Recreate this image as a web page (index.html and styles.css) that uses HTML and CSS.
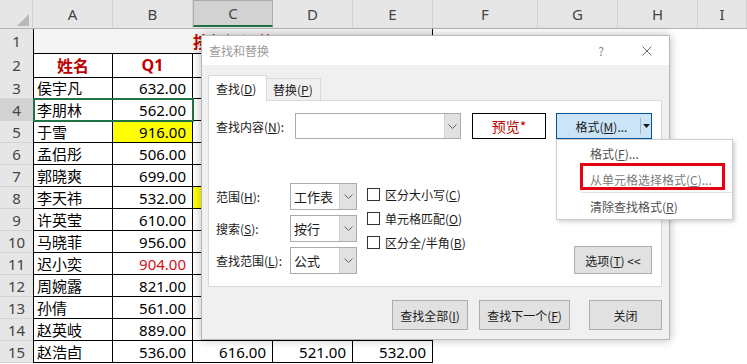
FILE: index.html
```html
<!DOCTYPE html>
<html lang="zh-CN">
<head>
<meta charset="utf-8">
<title>查找和替换</title>
<link rel="stylesheet" href="styles.css">
</head>
<body>
<div class="sheet">
  <div class="hrow">
    <div class="corner"><span class="tri"></span></div>
    <div class="ch">A</div><div class="ch">B</div><div class="ch sel">C</div><div class="ch">D</div><div class="ch">E</div><div class="ch">F</div><div class="ch">G</div><div class="ch">H</div><div class="ch">I</div>
  </div>
  <div class="row tall">
    <div class="rh">1</div>
    <div class="title">按部门汇总</div>
  </div>
  <div class="row tall">
    <div class="rh">2</div>
    <div class="c a h">姓名</div><div class="c h">Q1</div><div class="c"></div><div class="c"></div><div class="c"></div>
  </div>
  <div class="row"><div class="rh">3</div><div class="c a t">侯宇凡</div><div class="c n">632.00</div><div class="c"></div><div class="c"></div><div class="c"></div></div>
  <div class="row"><div class="rh rsel">4</div><div class="c a t">李朋林</div><div class="c n">562.00</div><div class="c"></div><div class="c"></div><div class="c"></div></div>
  <div class="row"><div class="rh">5</div><div class="c a t">于雪</div><div class="c n y">916.00</div><div class="c"></div><div class="c"></div><div class="c"></div></div>
  <div class="row"><div class="rh">6</div><div class="c a t">孟侣彤</div><div class="c n">506.00</div><div class="c"></div><div class="c"></div><div class="c"></div></div>
  <div class="row"><div class="rh">7</div><div class="c a t">郭晓爽</div><div class="c n">699.00</div><div class="c"></div><div class="c"></div><div class="c"></div></div>
  <div class="row"><div class="rh">8</div><div class="c a t">李天祎</div><div class="c n">532.00</div><div class="c y"></div><div class="c"></div><div class="c"></div></div>
  <div class="row"><div class="rh">9</div><div class="c a t">许英莹</div><div class="c n">610.00</div><div class="c"></div><div class="c"></div><div class="c"></div></div>
  <div class="row"><div class="rh">10</div><div class="c a t">马晓菲</div><div class="c n">956.00</div><div class="c"></div><div class="c"></div><div class="c"></div></div>
  <div class="row"><div class="rh">11</div><div class="c a t">迟小奕</div><div class="c n red">904.00</div><div class="c"></div><div class="c"></div><div class="c"></div></div>
  <div class="row"><div class="rh">12</div><div class="c a t">周婉露</div><div class="c n">821.00</div><div class="c"></div><div class="c"></div><div class="c"></div></div>
  <div class="row"><div class="rh">13</div><div class="c a t">孙倩</div><div class="c n">561.00</div><div class="c"></div><div class="c"></div><div class="c"></div></div>
  <div class="row"><div class="rh">14</div><div class="c a t">赵英岐</div><div class="c n">889.00</div><div class="c"></div><div class="c"></div><div class="c"></div></div>
  <div class="row"><div class="rh">15</div><div class="c a t">赵浩卣</div><div class="c n">536.00</div><div class="c n">616.00</div><div class="c n">521.00</div><div class="c n">532.00</div></div>
</div>

<div class="selbox"></div>

<div class="dialog">
  <div class="dtitle">
    <span class="dtext">查找和替换</span>
    <span class="help">?</span>
    <svg class="close" width="10" height="10" viewBox="0 0 10 10"><path d="M0.5 0.5 L9.5 9.5 M9.5 0.5 L0.5 9.5" stroke="#6b6b6b" stroke-width="1" fill="none"/></svg>
  </div>
  <div class="dbody">
    <div class="tabs">
      <div class="tab active">查找(<u>D</u>)</div>
      <div class="tab">替换(<u>P</u>)</div>
    </div>
    <div class="panel">
      <div class="findrow">
        <span class="flabel">查找内容(<u>N</u>):</span>
        <div class="combo">
          <div class="cinput"></div>
          <div class="cbtn"><svg width="9" height="5" viewBox="0 0 9 5"><path d="M0.5 0.5 L4.5 4.5 L8.5 0.5" fill="none" stroke="#606060" stroke-width="1"/></svg></div>
        </div>
        <div class="preview">预览*</div>
        <div class="fmtbtn">
          <span class="fmtmain">格式(<u>M</u>)...</span>
          <span class="fmtdiv"></span>
          <span class="fmtarrow"><svg width="7" height="4" viewBox="0 0 7 4"><path d="M0 0 L7 0 L3.5 4 Z" fill="#1a1a1a"/></svg></span>
        </div>
      </div>
      <div class="opts">
        <div class="selgrid">
          <span class="olabel">范围(<u>H</u>):</span>
          <div class="sel"><span class="sval">工作表</span><span class="sbtn"><svg width="9" height="5" viewBox="0 0 9 5"><path d="M0.5 0.5 L4.5 4.5 L8.5 0.5" fill="none" stroke="#606060" stroke-width="1"/></svg></span></div>
          <span class="olabel">搜索(<u>S</u>):</span>
          <div class="sel"><span class="sval">按行</span><span class="sbtn"><svg width="9" height="5" viewBox="0 0 9 5"><path d="M0.5 0.5 L4.5 4.5 L8.5 0.5" fill="none" stroke="#606060" stroke-width="1"/></svg></span></div>
          <span class="olabel">查找范围(<u>L</u>):</span>
          <div class="sel"><span class="sval">公式</span><span class="sbtn"><svg width="9" height="5" viewBox="0 0 9 5"><path d="M0.5 0.5 L4.5 4.5 L8.5 0.5" fill="none" stroke="#606060" stroke-width="1"/></svg></span></div>
        </div>
        <div class="checks">
          <div class="chk"><span class="box"></span><span>区分大小写(<u>C</u>)</span></div>
          <div class="chk"><span class="box"></span><span>单元格匹配(<u>O</u>)</span></div>
          <div class="chk"><span class="box"></span><span>区分全/半角(<u>B</u>)</span></div>
        </div>
        <div class="btn optbtn">选项(<u>T</u>) &lt;&lt;</div>
      </div>
    </div>
    <div class="btnrow">
      <div class="btn b1">查找全部(<u>I</u>)</div>
      <div class="btn b2">查找下一个(<u>F</u>)</div>
      <div class="btn b3">关闭</div>
    </div>
  </div>
</div>

<div class="menu">
  <div class="mi m1">格式(<u>F</u>)...</div>
  <div class="mi m2">从单元格选择格式(<u>C</u>)...</div>
  <div class="msep"></div>
  <div class="mi m3">清除查找格式(<u>R</u>)</div>
</div>
<div class="mark"></div>
</body>
</html>
```

FILE: styles.css
```css
* { box-sizing: border-box; margin: 0; padding: 0; }
html, body { width: 747px; height: 364px; overflow: hidden; background: #fff; }
body { position: relative; font-family: "Noto Sans", "Noto Sans CJK SC", sans-serif; color: #000; }

/* ---------- sheet ---------- */
.sheet { display: flex; flex-direction: column; }
.hrow, .row {
  display: grid;
  grid-template-columns: 33px 80px 80px 80px 80px 80px 105px 80px 80px 1fr;
}
.hrow { height: 29px; background: #e6e6e6; border-bottom: 1px solid #b4b4b4; }
.corner { display: flex; justify-content: flex-end; align-items: flex-end; padding: 0 3px 2px 0; border-right: 1px solid #d0d0d0; }
.tri { width: 0; height: 0; border-left: 12px solid transparent; border-bottom: 12px solid #b8b8b8; }
.ch { display: flex; align-items: center; justify-content: center; font-size: 15px; color: #444; border-right: 1px solid #d2d2d2; }
.ch.sel { background: #d2d2d2; border-bottom: 2px solid #217346; }

.row { height: 22px; }
.row.tall { height: 24px; }
.rh { display: flex; align-items: center; justify-content: center; background: #e6e6e6; color: #444; font-size: 15px; border-bottom: 1px solid #d4d4d4; }
.rh.rsel { background: #d2d2d2; }

.title {
  grid-column: 2 / 7;
  background: #f4f4f4;
  border-left: 1px solid #000; border-right: 1px solid #000; border-bottom: 1px solid #000;
  display: flex; justify-content: center; align-items: center;
  color: #c00000; font-weight: bold; font-size: 16px;
  font-family: "Noto Sans CJK SC", sans-serif;
}

.c { display: flex; align-items: center; font-size: 15px; border-right: 1px solid #000; border-bottom: 1px solid #000; white-space: nowrap; }
.c.a { border-left: 1px solid #000; }
.c.t { padding-left: 3px; font-family: "Noto Sans CJK SC", sans-serif; }
.c.n { justify-content: flex-end; padding-right: 6px; }
.c.h { justify-content: center; color: #c00000; font-weight: bold; font-size: 16px; }
.c.y { background: #ffff00; }
.c.red { color: #d0101a; }

.selbox { position: absolute; left: 33px; top: 98px; width: 161px; height: 24px; border: 2px solid #217346; }

/* ---------- dialog ---------- */
.dialog {
  position: absolute; left: 201px; top: 35px; width: 469px; height: 305px;
  background: #f0f0f0; border: 1px solid #b8b8b8;
  box-shadow: 0 0 9px rgba(0, 0, 0, 0.28);
  font-family: "Noto Sans CJK SC", sans-serif; font-size: 12px; color: #1a1a1a;
  display: flex; flex-direction: column;
}
.dialog u { text-decoration: underline; text-underline-offset: 1px; }
.dtitle { height: 29px; background: #fff; display: flex; align-items: center; padding: 0 17px 0 7px; }
.dtext { flex: 1; color: #9a9a9a; font-size: 12px; }
.help { color: #8a8a8a; font-size: 12px; width: 10px; text-align: center; margin-right: 36px; }
.close { display: block; }

.dbody { flex: 1; padding: 10px 7px 0 6px; display: flex; flex-direction: column; }
.tabs { display: flex; align-items: flex-end; height: 26px; position: relative; z-index: 1; margin-bottom: -1px; }
.tab { height: 22px; margin-bottom: 1px; padding: 0 0 0 6px; display: flex; align-items: center; white-space: nowrap; flex-shrink: 0; background: #f0f0f0; border: 1px solid #d9d9d9; border-bottom: none; border-left: none; width: 54px; }
.tab.active { height: 26px; margin-bottom: 0; width: 59px; background: #fff; border-left: 1px solid #d9d9d9; padding-left: 7px; }

.panel { height: 187px; background: #fff; border: 1px solid #d9d9d9; padding: 12px 9px 0 7px; display: flex; flex-direction: column; }
.findrow { display: flex; align-items: center; height: 26px; }
.flabel { width: 79px; white-space: nowrap; }
.combo { width: 166px; height: 26px; border: 1px solid #acacac; display: flex; background: #fff; }
.cinput { flex: 1; }
.cbtn { width: 16px; background: #e1e1e1; border-left: 1px solid #d0d0d0; display: flex; align-items: center; justify-content: center; }
.preview { margin-left: 11px; width: 74px; height: 26px; border: 1px solid #000; background: #fff; display: flex; align-items: center; justify-content: center; color: #c00000; font-size: 14px; }
.fmtbtn { margin-left: 10px; width: 96px; height: 26px; background: #cce4f7; border: 1px solid #005499; display: flex; align-items: center; }
.fmtmain { flex: 1; text-align: center; padding-left: 6px; white-space: nowrap; }
.fmtdiv { width: 1px; height: 16px; background: #9cb8d0; }
.fmtarrow { width: 10px; display: flex; justify-content: center; }

.opts { margin-top: 44px; display: flex; }
.selgrid { display: grid; grid-template-columns: 74px 67px; grid-auto-rows: 27px; row-gap: 5px; align-items: center; }
.olabel { white-space: nowrap; }
.sel { height: 27px; border: 1px solid #acacac; background: #fff; display: flex; }
.sval { flex: 1; display: flex; align-items: center; padding-left: 3px; font-size: 13px; }
.sbtn { width: 17px; background: #e1e1e1; border-left: 1px solid #d0d0d0; display: flex; align-items: center; justify-content: center; }
.checks { margin-left: 10px; margin-top: -1px; display: flex; flex-direction: column; }
.chk { height: 24px; display: flex; align-items: center; font-size: 12px; white-space: nowrap; }
.box { width: 13px; height: 13px; border: 1px solid #333; background: #fff; margin-right: 5px; }

.btn { background: #e1e1e1; border: 1px solid #adadad; display: flex; align-items: center; justify-content: center; white-space: nowrap; }
.optbtn { margin-left: auto; align-self: flex-end; width: 78px; height: 28px; }

.btnrow { margin-top: 13px; display: flex; justify-content: flex-end; }
.btnrow .btn { height: 30px; }
.b1 { width: 76px; }
.b2 { width: 91px; margin-left: 11px; }
.b3 { width: 73px; margin-left: 19px; }

/* ---------- dropdown menu ---------- */
.menu {
  position: absolute; left: 556px; top: 139px; width: 177px;
  background: #fff; border: 1px solid #cfcfcf;
  box-shadow: 2px 2px 4px rgba(0, 0, 0, 0.18);
  font-family: "Noto Sans CJK SC", sans-serif; font-size: 12px;
}
.mi { height: 26px; display: flex; align-items: center; padding-left: 33px; color: #4f4f4f; white-space: nowrap; }
.mi.m2 { color: #7c7c7c; }
.mi u { text-decoration: underline; text-underline-offset: 1px; }
.msep { height: 1px; background: #e3e3e3; margin-left: 24px; }

.mark { position: absolute; left: 580px; top: 163px; width: 145px; height: 27px; border: 3px solid #e60012; }
```
